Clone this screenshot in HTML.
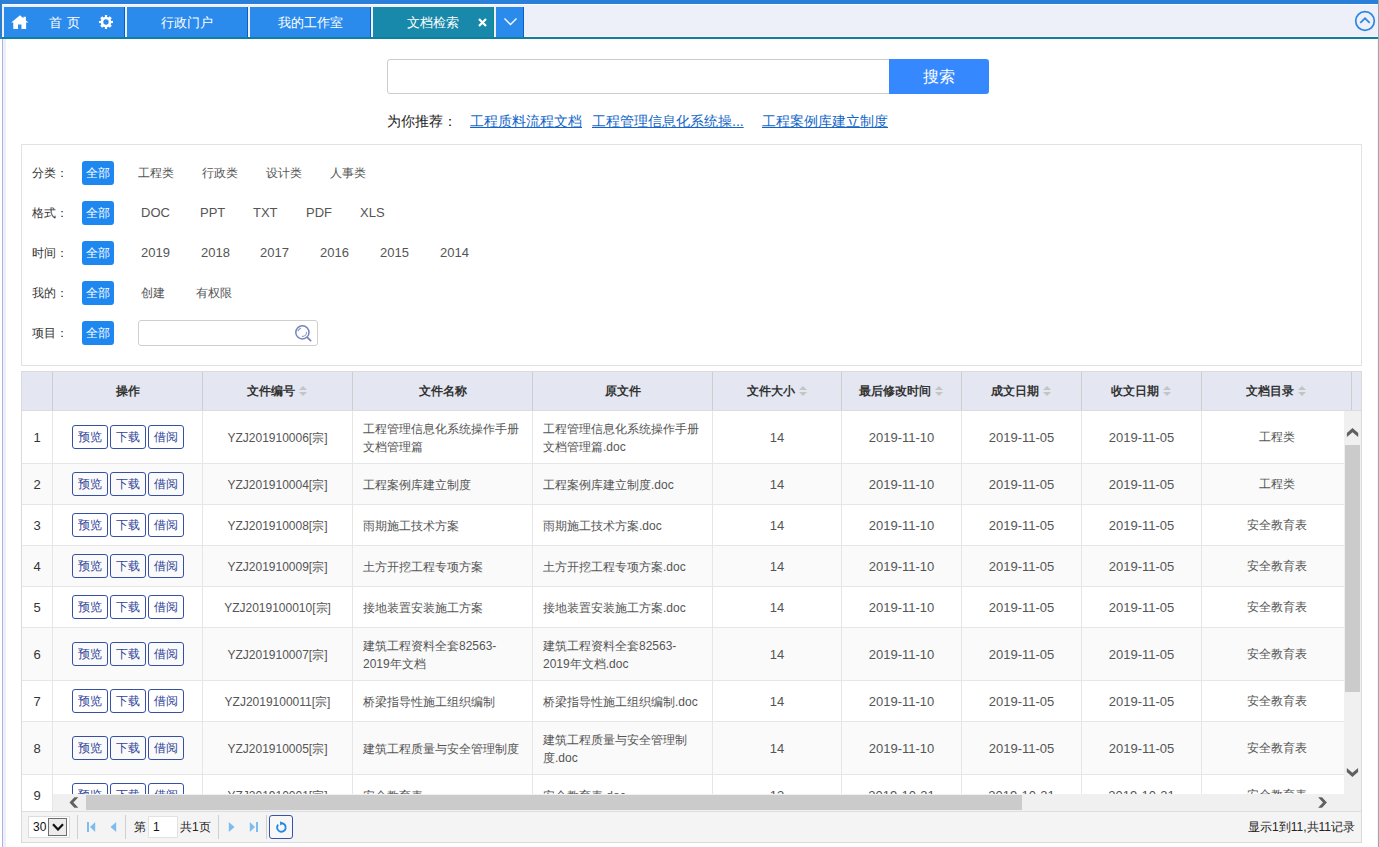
<!DOCTYPE html>
<html><head><meta charset="utf-8">
<style>
*{box-sizing:border-box;margin:0;padding:0}
html,body{width:1379px;height:847px;overflow:hidden;background:#fff}
body{position:relative;font-family:"Liberation Sans",sans-serif;font-size:12px;color:#333}
.a{position:absolute}
/* header */
#topbar{left:0;top:0;width:1379px;height:4px;background:#2a80d8}
#hdr{left:0;top:4px;width:1379px;height:33px;background:#edf0f8;border-top:1px solid #fbfbfe;border-bottom:1px solid #fbfbfe}
#teal{left:0;top:37px;width:1378px;height:2px;background:#0d7fa1}
#lstrip{left:0;top:0;width:2px;height:39px;background:#2a7dd2}
.tab{top:7px;height:30px;background:#2b8bed;border-right:1px solid #0a5fc2;color:#fff;font-size:13px;line-height:31px;text-align:center}
.tab.act{background:#1889ab;border-right-color:#0b8a84}
#lline{left:2px;top:39px;width:1px;height:808px;background:#aab6da}
#lline2{left:3px;top:39px;width:3px;height:808px;background:#edf0f9}
#rline{left:1378px;top:0;width:1px;height:847px;background:#a4a4a4}
#rline2{left:1377px;top:39px;width:1px;height:808px;background:#f2f4fd}
/* search */
#sinput{left:387px;top:59px;width:506px;height:35px;border:1px solid #cccccc;border-radius:3px;background:#fff}
#sbtn{left:889px;top:59px;width:100px;height:35px;background:#3688ff;border-radius:0 3px 3px 0;color:#fff;font-size:16px;line-height:35px;text-align:center}
#rec{left:387px;top:112px;font-size:14px;line-height:18px;color:#222;white-space:nowrap}
#rec a{color:#1266c8;text-decoration:underline;position:absolute;top:0;white-space:nowrap}
/* filter panel */
#panel{left:21px;top:144px;width:1341px;height:222px;border:1px solid #e2e2e2;background:#fff}
.lbl{left:32px;font-size:12px;color:#333;line-height:24px}
.all{left:82px;width:32px;height:24px;background:#1e88f0;border-radius:3px;color:#fff;font-size:12px;line-height:24px;text-align:center}
.opt{font-size:12px;color:#555;line-height:24px;white-space:nowrap}
#proj{left:138px;top:320px;width:180px;height:26px;border:1px solid #cfcfcf;border-radius:3px;background:#fff}

#grid{left:21px;top:371px;width:1341px;height:472px;border:1px solid #dadada;background:#fff}
#ghead{left:22px;top:372px;width:1339px;height:39px;background:#e4e7f1;border-bottom:1px solid #dcdcdc}
.hc{top:372px;height:38px;line-height:38px;text-align:center;font-weight:bold;color:#333;font-size:12px;white-space:nowrap}
.srt{display:inline-block;width:9px;height:11px;margin-left:4px;vertical-align:-2px;position:relative}
.srt:before{content:"";position:absolute;left:0;top:0;border-left:4.5px solid transparent;border-right:4.5px solid transparent;border-bottom:4.5px solid #c4c4c4}
.srt:after{content:"";position:absolute;left:0;top:6px;border-left:4.5px solid transparent;border-right:4.5px solid transparent;border-top:4.5px solid #c4c4c4}
.hl{top:372px;width:1px;height:38px;background:#cdcdcd}
.row{left:22px;width:1322px;overflow:hidden}
.row .c{top:0;text-align:center;color:#555;white-space:nowrap;overflow:hidden;font-size:12px}
.row .num{color:#333}
.row .lat{font-size:13px;padding-top:1px}
.row .code{padding-top:1px}
.row .lft{text-align:left;padding-left:10px}
.ml{display:inline-block;line-height:18px;vertical-align:middle;position:relative;top:1px}
.bl{top:0;width:1px;background:#e6e6e6}
.hb{left:0;width:1322px;height:1px;background:#e6e6e6}
.btn{position:absolute;width:36px;height:24px;border:1px solid #3650a6;border-radius:3px;color:#2e4499;font-weight:normal;line-height:22px;text-align:center;font-size:12px}
#vsb{left:1344px;top:411px;width:17px;height:383px;background:#f0f0f0}
#vthumb{left:1345px;top:445px;width:15px;height:247px;background:#cbcbcb}
#hsb{left:53px;top:794px;width:1308px;height:17px;background:#f0f0f0}
#hthumb{left:86px;top:795px;width:936px;height:15px;background:#cbcbcb}
#pager{left:22px;top:811px;width:1339px;height:31px;background:#f4f4f4;border-top:1px solid #dedede}
#psel{left:28px;top:816px;width:42px;height:22px;background:#fff;border:1px solid #dcdcdc}
#pselbtn{left:48px;top:818px;width:19px;height:18px;background:#ececec;border:1px solid #6e6e6e}
.psep{top:815px;width:1px;height:24px;background:#cfcfcf}
.ptxt{top:817px;line-height:20px;font-size:12px;color:#222;white-space:nowrap}
#ppage{left:148px;top:816px;width:30px;height:22px;background:#fff;border:1px solid #e2e2e2}
#prefresh{left:269px;top:815px;width:24px;height:24px;border:1px solid #3a52a8;border-radius:3px;background:#f7f7f7}

</style></head><body>
<div class="a" id="topbar"></div>
<div class="a" id="hdr"></div>
<div class="a" id="teal"></div>
<div class="a" id="lstrip"></div>
<div class="a" id="lline"></div>
<div class="a" id="lline2"></div>
<div class="a" id="rline2"></div>
<div class="a" id="rline"></div>

<div class="a tab" style="left:4px;width:121px;text-align:left">
  <svg class="a" style="left:6.5px;top:7.5px" width="18" height="14.5" viewBox="0 0 17 14"><path d="M8.5 0.3 L0 7.3 L2 7.3 L2 14 L6.6 14 L6.6 9.2 L9.9 9.2 L9.9 14 L14.4 14 L14.4 7.3 L16.6 7.3 L14.2 5.2 L14.2 1.6 L11.8 1.6 L11.8 3.1 Z" fill="#fff"/></svg>
  <span class="a" style="left:45px;top:0;font-size:13px;letter-spacing:0.5px">首 页</span>
  <svg class="a" style="left:94px;top:7px" width="16" height="16" viewBox="0 0 16 16"><g fill="#fff"><circle cx="8" cy="8" r="5.3"/><rect x="6.9" y="1" width="2.2" height="14"/><rect x="1" y="6.9" width="14" height="2.2"/><rect x="6.6" y="1.2" width="2.8" height="13.6" transform="rotate(45 8 8)"/><rect x="6.6" y="1.2" width="2.8" height="13.6" transform="rotate(135 8 8)"/></g><circle cx="8" cy="8" r="2.7" fill="#2b8bed"/></svg>
</div>
<div class="a tab" style="left:127px;width:121px">行政门户</div>
<div class="a tab" style="left:250px;width:121px">我的工作室</div>
<div class="a tab act" style="left:373px;width:121px"><span style="padding-left:0px">文档检索</span>
  <svg class="a" style="left:104.5px;top:10.5px" width="9" height="9" viewBox="0 0 9 9"><path d="M1 1L8 8M8 1L1 8" stroke="#fff" stroke-width="2.2"/></svg>
</div>
<div class="a tab" style="left:496px;width:28px">
  <svg class="a" style="left:6.5px;top:10px" width="15" height="10" viewBox="0 0 15 10"><path d="M1.5 1.5L7.5 7.5L13.5 1.5" stroke="#fff" stroke-width="1.35" fill="none"/></svg>
</div>
<svg class="a" style="left:1354px;top:10px" width="22" height="22" viewBox="0 0 22 22"><circle cx="11" cy="11" r="9.3" stroke="#2a86e2" stroke-width="1.7" fill="none"/><path d="M6.3 12.8L11 8.3L15.7 12.8" stroke="#2a86e2" stroke-width="1.7" fill="none"/></svg>

<!-- search -->
<div class="a" id="sinput"></div>
<div class="a" id="sbtn">搜索</div>
<div class="a" id="rec">为你推荐：
  <a style="left:83px">工程质料流程文档</a>
  <a style="left:205px">工程管理信息化系统操...</a>
  <a style="left:375px">工程案例库建立制度</a>
</div>

<!-- filter panel -->
<div class="a" id="panel"></div>
<div class="a lbl" style="top:161px">分类：</div>
<div class="a all" style="top:161px">全部</div>
<div class="a opt" style="top:161px;left:138px">工程类</div>
<div class="a opt" style="top:161px;left:202px">行政类</div>
<div class="a opt" style="top:161px;left:266px">设计类</div>
<div class="a opt" style="top:161px;left:330px">人事类</div>

<div class="a lbl" style="top:201px">格式：</div>
<div class="a all" style="top:201px">全部</div>
<div class="a opt" style="top:201px;left:141px;font-size:13px">DOC</div>
<div class="a opt" style="top:201px;left:200px;font-size:13px">PPT</div>
<div class="a opt" style="top:201px;left:253px;font-size:13px">TXT</div>
<div class="a opt" style="top:201px;left:306px;font-size:13px">PDF</div>
<div class="a opt" style="top:201px;left:360px;font-size:13px">XLS</div>

<div class="a lbl" style="top:241px">时间：</div>
<div class="a all" style="top:241px">全部</div>
<div class="a opt" style="top:241px;left:141px;font-size:13px">2019</div>
<div class="a opt" style="top:241px;left:201px;font-size:13px">2018</div>
<div class="a opt" style="top:241px;left:260px;font-size:13px">2017</div>
<div class="a opt" style="top:241px;left:320px;font-size:13px">2016</div>
<div class="a opt" style="top:241px;left:380px;font-size:13px">2015</div>
<div class="a opt" style="top:241px;left:440px;font-size:13px">2014</div>

<div class="a lbl" style="top:281px">我的：</div>
<div class="a all" style="top:281px">全部</div>
<div class="a opt" style="top:281px;left:141px">创建</div>
<div class="a opt" style="top:281px;left:196px">有权限</div>

<div class="a lbl" style="top:321px">项目：</div>
<div class="a all" style="top:321px">全部</div>
<div class="a" id="proj"></div>
<svg class="a" style="left:294px;top:324px" width="18" height="18" viewBox="0 0 18 18"><circle cx="8.4" cy="8.4" r="6.6" stroke="#7584bb" stroke-width="1.5" fill="none"/><path d="M13.3 13.3L16.6 16.6" stroke="#7584bb" stroke-width="1.7" stroke-linecap="round"/><path d="M4.1 6.8A4.6 4.6 0 0 1 6.6 4.2" stroke="#8593c4" stroke-width="1.1" fill="none" stroke-linecap="round"/><path d="M12.5 8.2A4.2 4.2 0 0 1 8.4 12.4" stroke="#8593c4" stroke-width="1.1" fill="none" stroke-linecap="round"/></svg>

<!-- GRID -->
<div class="a" id="grid"></div>
<div class="a" id="ghead"></div>
<div class="a hc" style="left:22px;width:30px"><span></span></div>
<div class="a hc" style="left:53px;width:149px"><span>操作</span></div>
<div class="a hc" style="left:203px;width:149px"><span>文件编号</span><i class="srt"></i></div>
<div class="a hc" style="left:353px;width:179px"><span>文件名称</span></div>
<div class="a hc" style="left:533px;width:179px"><span>原文件</span></div>
<div class="a hc" style="left:713px;width:128px"><span>文件大小</span><i class="srt"></i></div>
<div class="a hc" style="left:842px;width:119px"><span>最后修改时间</span><i class="srt"></i></div>
<div class="a hc" style="left:962px;width:119px"><span>成文日期</span><i class="srt"></i></div>
<div class="a hc" style="left:1082px;width:119px"><span>收文日期</span><i class="srt"></i></div>
<div class="a hc" style="left:1202px;width:149px"><span>文档目录</span><i class="srt"></i></div>
<div class="a hl" style="left:52px"></div>
<div class="a hl" style="left:202px"></div>
<div class="a hl" style="left:352px"></div>
<div class="a hl" style="left:532px"></div>
<div class="a hl" style="left:712px"></div>
<div class="a hl" style="left:841px"></div>
<div class="a hl" style="left:961px"></div>
<div class="a hl" style="left:1081px"></div>
<div class="a hl" style="left:1201px"></div>
<div class="a hl" style="left:1351px"></div>
<div class="a row" style="top:411px;height:53px;background:#fff">
<div class="a c num lat" style="left:0px;width:30px;height:52px;line-height:52px">1</div>
<div class="a c ops" style="left:31px;width:149px;height:52px;line-height:51px"><b class="btn" style="left:19px;top:14px">预览</b><b class="btn" style="left:57px;top:14px">下载</b><b class="btn" style="left:95px;top:14px">借阅</b></div>
<div class="a c code" style="left:181px;width:149px;height:52px;line-height:52px">YZJ201910006[宗]</div>
<div class="a c lft" style="left:331px;width:179px;height:52px;line-height:51px"><span class="ml">工程管理信息化系统操作手册<br>文档管理篇</span></div>
<div class="a c lft" style="left:511px;width:179px;height:52px;line-height:51px"><span class="ml">工程管理信息化系统操作手册<br>文档管理篇.doc</span></div>
<div class="a c lat" style="left:691px;width:128px;height:52px;line-height:52px">14</div>
<div class="a c lat" style="left:820px;width:119px;height:52px;line-height:52px">2019-11-10</div>
<div class="a c lat" style="left:940px;width:119px;height:52px;line-height:52px">2019-11-05</div>
<div class="a c lat" style="left:1060px;width:119px;height:52px;line-height:52px">2019-11-05</div>
<div class="a c cat" style="left:1180px;width:149px;height:52px;line-height:52px">工程类</div>
<div class="a bl" style="left:30px;height:53px"></div>
<div class="a bl" style="left:180px;height:53px"></div>
<div class="a bl" style="left:330px;height:53px"></div>
<div class="a bl" style="left:510px;height:53px"></div>
<div class="a bl" style="left:690px;height:53px"></div>
<div class="a bl" style="left:819px;height:53px"></div>
<div class="a bl" style="left:939px;height:53px"></div>
<div class="a bl" style="left:1059px;height:53px"></div>
<div class="a bl" style="left:1179px;height:53px"></div>
<div class="a bl" style="left:1329px;height:53px"></div>
<div class="a hb" style="top:52px"></div>
</div>
<div class="a row" style="top:464px;height:41px;background:#fafafa">
<div class="a c num lat" style="left:0px;width:30px;height:40px;line-height:40px">2</div>
<div class="a c ops" style="left:31px;width:149px;height:40px;line-height:38px"><b class="btn" style="left:19px;top:8px">预览</b><b class="btn" style="left:57px;top:8px">下载</b><b class="btn" style="left:95px;top:8px">借阅</b></div>
<div class="a c code" style="left:181px;width:149px;height:40px;line-height:40px">YZJ201910004[宗]</div>
<div class="a c lft" style="left:331px;width:179px;height:40px;line-height:38px"><span class="ml">工程案例库建立制度</span></div>
<div class="a c lft" style="left:511px;width:179px;height:40px;line-height:38px"><span class="ml">工程案例库建立制度.doc</span></div>
<div class="a c lat" style="left:691px;width:128px;height:40px;line-height:40px">14</div>
<div class="a c lat" style="left:820px;width:119px;height:40px;line-height:40px">2019-11-10</div>
<div class="a c lat" style="left:940px;width:119px;height:40px;line-height:40px">2019-11-05</div>
<div class="a c lat" style="left:1060px;width:119px;height:40px;line-height:40px">2019-11-05</div>
<div class="a c cat" style="left:1180px;width:149px;height:40px;line-height:40px">工程类</div>
<div class="a bl" style="left:30px;height:41px"></div>
<div class="a bl" style="left:180px;height:41px"></div>
<div class="a bl" style="left:330px;height:41px"></div>
<div class="a bl" style="left:510px;height:41px"></div>
<div class="a bl" style="left:690px;height:41px"></div>
<div class="a bl" style="left:819px;height:41px"></div>
<div class="a bl" style="left:939px;height:41px"></div>
<div class="a bl" style="left:1059px;height:41px"></div>
<div class="a bl" style="left:1179px;height:41px"></div>
<div class="a bl" style="left:1329px;height:41px"></div>
<div class="a hb" style="top:40px"></div>
</div>
<div class="a row" style="top:505px;height:41px;background:#fff">
<div class="a c num lat" style="left:0px;width:30px;height:40px;line-height:40px">3</div>
<div class="a c ops" style="left:31px;width:149px;height:40px;line-height:38px"><b class="btn" style="left:19px;top:8px">预览</b><b class="btn" style="left:57px;top:8px">下载</b><b class="btn" style="left:95px;top:8px">借阅</b></div>
<div class="a c code" style="left:181px;width:149px;height:40px;line-height:40px">YZJ201910008[宗]</div>
<div class="a c lft" style="left:331px;width:179px;height:40px;line-height:38px"><span class="ml">雨期施工技术方案</span></div>
<div class="a c lft" style="left:511px;width:179px;height:40px;line-height:38px"><span class="ml">雨期施工技术方案.doc</span></div>
<div class="a c lat" style="left:691px;width:128px;height:40px;line-height:40px">14</div>
<div class="a c lat" style="left:820px;width:119px;height:40px;line-height:40px">2019-11-10</div>
<div class="a c lat" style="left:940px;width:119px;height:40px;line-height:40px">2019-11-05</div>
<div class="a c lat" style="left:1060px;width:119px;height:40px;line-height:40px">2019-11-05</div>
<div class="a c cat" style="left:1180px;width:149px;height:40px;line-height:40px">安全教育表</div>
<div class="a bl" style="left:30px;height:41px"></div>
<div class="a bl" style="left:180px;height:41px"></div>
<div class="a bl" style="left:330px;height:41px"></div>
<div class="a bl" style="left:510px;height:41px"></div>
<div class="a bl" style="left:690px;height:41px"></div>
<div class="a bl" style="left:819px;height:41px"></div>
<div class="a bl" style="left:939px;height:41px"></div>
<div class="a bl" style="left:1059px;height:41px"></div>
<div class="a bl" style="left:1179px;height:41px"></div>
<div class="a bl" style="left:1329px;height:41px"></div>
<div class="a hb" style="top:40px"></div>
</div>
<div class="a row" style="top:546px;height:41px;background:#fafafa">
<div class="a c num lat" style="left:0px;width:30px;height:40px;line-height:40px">4</div>
<div class="a c ops" style="left:31px;width:149px;height:40px;line-height:38px"><b class="btn" style="left:19px;top:8px">预览</b><b class="btn" style="left:57px;top:8px">下载</b><b class="btn" style="left:95px;top:8px">借阅</b></div>
<div class="a c code" style="left:181px;width:149px;height:40px;line-height:40px">YZJ201910009[宗]</div>
<div class="a c lft" style="left:331px;width:179px;height:40px;line-height:38px"><span class="ml">土方开挖工程专项方案</span></div>
<div class="a c lft" style="left:511px;width:179px;height:40px;line-height:38px"><span class="ml">土方开挖工程专项方案.doc</span></div>
<div class="a c lat" style="left:691px;width:128px;height:40px;line-height:40px">14</div>
<div class="a c lat" style="left:820px;width:119px;height:40px;line-height:40px">2019-11-10</div>
<div class="a c lat" style="left:940px;width:119px;height:40px;line-height:40px">2019-11-05</div>
<div class="a c lat" style="left:1060px;width:119px;height:40px;line-height:40px">2019-11-05</div>
<div class="a c cat" style="left:1180px;width:149px;height:40px;line-height:40px">安全教育表</div>
<div class="a bl" style="left:30px;height:41px"></div>
<div class="a bl" style="left:180px;height:41px"></div>
<div class="a bl" style="left:330px;height:41px"></div>
<div class="a bl" style="left:510px;height:41px"></div>
<div class="a bl" style="left:690px;height:41px"></div>
<div class="a bl" style="left:819px;height:41px"></div>
<div class="a bl" style="left:939px;height:41px"></div>
<div class="a bl" style="left:1059px;height:41px"></div>
<div class="a bl" style="left:1179px;height:41px"></div>
<div class="a bl" style="left:1329px;height:41px"></div>
<div class="a hb" style="top:40px"></div>
</div>
<div class="a row" style="top:587px;height:41px;background:#fff">
<div class="a c num lat" style="left:0px;width:30px;height:40px;line-height:40px">5</div>
<div class="a c ops" style="left:31px;width:149px;height:40px;line-height:38px"><b class="btn" style="left:19px;top:8px">预览</b><b class="btn" style="left:57px;top:8px">下载</b><b class="btn" style="left:95px;top:8px">借阅</b></div>
<div class="a c code" style="left:181px;width:149px;height:40px;line-height:40px">YZJ2019100010[宗]</div>
<div class="a c lft" style="left:331px;width:179px;height:40px;line-height:38px"><span class="ml">接地装置安装施工方案</span></div>
<div class="a c lft" style="left:511px;width:179px;height:40px;line-height:38px"><span class="ml">接地装置安装施工方案.doc</span></div>
<div class="a c lat" style="left:691px;width:128px;height:40px;line-height:40px">14</div>
<div class="a c lat" style="left:820px;width:119px;height:40px;line-height:40px">2019-11-10</div>
<div class="a c lat" style="left:940px;width:119px;height:40px;line-height:40px">2019-11-05</div>
<div class="a c lat" style="left:1060px;width:119px;height:40px;line-height:40px">2019-11-05</div>
<div class="a c cat" style="left:1180px;width:149px;height:40px;line-height:40px">安全教育表</div>
<div class="a bl" style="left:30px;height:41px"></div>
<div class="a bl" style="left:180px;height:41px"></div>
<div class="a bl" style="left:330px;height:41px"></div>
<div class="a bl" style="left:510px;height:41px"></div>
<div class="a bl" style="left:690px;height:41px"></div>
<div class="a bl" style="left:819px;height:41px"></div>
<div class="a bl" style="left:939px;height:41px"></div>
<div class="a bl" style="left:1059px;height:41px"></div>
<div class="a bl" style="left:1179px;height:41px"></div>
<div class="a bl" style="left:1329px;height:41px"></div>
<div class="a hb" style="top:40px"></div>
</div>
<div class="a row" style="top:628px;height:53px;background:#fafafa">
<div class="a c num lat" style="left:0px;width:30px;height:52px;line-height:52px">6</div>
<div class="a c ops" style="left:31px;width:149px;height:52px;line-height:51px"><b class="btn" style="left:19px;top:14px">预览</b><b class="btn" style="left:57px;top:14px">下载</b><b class="btn" style="left:95px;top:14px">借阅</b></div>
<div class="a c code" style="left:181px;width:149px;height:52px;line-height:52px">YZJ201910007[宗]</div>
<div class="a c lft" style="left:331px;width:179px;height:52px;line-height:51px"><span class="ml">建筑工程资料全套82563-<br>2019年文档</span></div>
<div class="a c lft" style="left:511px;width:179px;height:52px;line-height:51px"><span class="ml">建筑工程资料全套82563-<br>2019年文档.doc</span></div>
<div class="a c lat" style="left:691px;width:128px;height:52px;line-height:52px">14</div>
<div class="a c lat" style="left:820px;width:119px;height:52px;line-height:52px">2019-11-10</div>
<div class="a c lat" style="left:940px;width:119px;height:52px;line-height:52px">2019-11-05</div>
<div class="a c lat" style="left:1060px;width:119px;height:52px;line-height:52px">2019-11-05</div>
<div class="a c cat" style="left:1180px;width:149px;height:52px;line-height:52px">安全教育表</div>
<div class="a bl" style="left:30px;height:53px"></div>
<div class="a bl" style="left:180px;height:53px"></div>
<div class="a bl" style="left:330px;height:53px"></div>
<div class="a bl" style="left:510px;height:53px"></div>
<div class="a bl" style="left:690px;height:53px"></div>
<div class="a bl" style="left:819px;height:53px"></div>
<div class="a bl" style="left:939px;height:53px"></div>
<div class="a bl" style="left:1059px;height:53px"></div>
<div class="a bl" style="left:1179px;height:53px"></div>
<div class="a bl" style="left:1329px;height:53px"></div>
<div class="a hb" style="top:52px"></div>
</div>
<div class="a row" style="top:681px;height:41px;background:#fff">
<div class="a c num lat" style="left:0px;width:30px;height:40px;line-height:40px">7</div>
<div class="a c ops" style="left:31px;width:149px;height:40px;line-height:38px"><b class="btn" style="left:19px;top:8px">预览</b><b class="btn" style="left:57px;top:8px">下载</b><b class="btn" style="left:95px;top:8px">借阅</b></div>
<div class="a c code" style="left:181px;width:149px;height:40px;line-height:40px">YZJ2019100011[宗]</div>
<div class="a c lft" style="left:331px;width:179px;height:40px;line-height:38px"><span class="ml">桥梁指导性施工组织编制</span></div>
<div class="a c lft" style="left:511px;width:179px;height:40px;line-height:38px"><span class="ml">桥梁指导性施工组织编制.doc</span></div>
<div class="a c lat" style="left:691px;width:128px;height:40px;line-height:40px">14</div>
<div class="a c lat" style="left:820px;width:119px;height:40px;line-height:40px">2019-11-10</div>
<div class="a c lat" style="left:940px;width:119px;height:40px;line-height:40px">2019-11-05</div>
<div class="a c lat" style="left:1060px;width:119px;height:40px;line-height:40px">2019-11-05</div>
<div class="a c cat" style="left:1180px;width:149px;height:40px;line-height:40px">安全教育表</div>
<div class="a bl" style="left:30px;height:41px"></div>
<div class="a bl" style="left:180px;height:41px"></div>
<div class="a bl" style="left:330px;height:41px"></div>
<div class="a bl" style="left:510px;height:41px"></div>
<div class="a bl" style="left:690px;height:41px"></div>
<div class="a bl" style="left:819px;height:41px"></div>
<div class="a bl" style="left:939px;height:41px"></div>
<div class="a bl" style="left:1059px;height:41px"></div>
<div class="a bl" style="left:1179px;height:41px"></div>
<div class="a bl" style="left:1329px;height:41px"></div>
<div class="a hb" style="top:40px"></div>
</div>
<div class="a row" style="top:722px;height:53px;background:#fafafa">
<div class="a c num lat" style="left:0px;width:30px;height:52px;line-height:52px">8</div>
<div class="a c ops" style="left:31px;width:149px;height:52px;line-height:51px"><b class="btn" style="left:19px;top:14px">预览</b><b class="btn" style="left:57px;top:14px">下载</b><b class="btn" style="left:95px;top:14px">借阅</b></div>
<div class="a c code" style="left:181px;width:149px;height:52px;line-height:52px">YZJ201910005[宗]</div>
<div class="a c lft" style="left:331px;width:179px;height:52px;line-height:51px"><span class="ml">建筑工程质量与安全管理制度</span></div>
<div class="a c lft" style="left:511px;width:179px;height:52px;line-height:51px"><span class="ml">建筑工程质量与安全管理制<br>度.doc</span></div>
<div class="a c lat" style="left:691px;width:128px;height:52px;line-height:52px">14</div>
<div class="a c lat" style="left:820px;width:119px;height:52px;line-height:52px">2019-11-10</div>
<div class="a c lat" style="left:940px;width:119px;height:52px;line-height:52px">2019-11-05</div>
<div class="a c lat" style="left:1060px;width:119px;height:52px;line-height:52px">2019-11-05</div>
<div class="a c cat" style="left:1180px;width:149px;height:52px;line-height:52px">安全教育表</div>
<div class="a bl" style="left:30px;height:53px"></div>
<div class="a bl" style="left:180px;height:53px"></div>
<div class="a bl" style="left:330px;height:53px"></div>
<div class="a bl" style="left:510px;height:53px"></div>
<div class="a bl" style="left:690px;height:53px"></div>
<div class="a bl" style="left:819px;height:53px"></div>
<div class="a bl" style="left:939px;height:53px"></div>
<div class="a bl" style="left:1059px;height:53px"></div>
<div class="a bl" style="left:1179px;height:53px"></div>
<div class="a bl" style="left:1329px;height:53px"></div>
<div class="a hb" style="top:52px"></div>
</div>
<div class="a row" style="top:775px;height:36px;background:#fff">
<div class="a c num lat" style="left:0px;width:30px;height:40px;line-height:40px">9</div>
<div class="a c ops" style="left:31px;width:149px;height:40px;line-height:38px"><b class="btn" style="left:19px;top:8px">预览</b><b class="btn" style="left:57px;top:8px">下载</b><b class="btn" style="left:95px;top:8px">借阅</b></div>
<div class="a c code" style="left:181px;width:149px;height:40px;line-height:40px">YZJ201910001[宗]</div>
<div class="a c lft" style="left:331px;width:179px;height:40px;line-height:38px"><span class="ml">安全教育表</span></div>
<div class="a c lft" style="left:511px;width:179px;height:40px;line-height:38px"><span class="ml">安全教育表.doc</span></div>
<div class="a c lat" style="left:691px;width:128px;height:40px;line-height:40px">13</div>
<div class="a c lat" style="left:820px;width:119px;height:40px;line-height:40px">2019-10-31</div>
<div class="a c lat" style="left:940px;width:119px;height:40px;line-height:40px">2019-10-31</div>
<div class="a c lat" style="left:1060px;width:119px;height:40px;line-height:40px">2019-10-31</div>
<div class="a c cat" style="left:1180px;width:149px;height:40px;line-height:40px">安全教育表</div>
<div class="a bl" style="left:30px;height:36px"></div>
<div class="a bl" style="left:180px;height:36px"></div>
<div class="a bl" style="left:330px;height:36px"></div>
<div class="a bl" style="left:510px;height:36px"></div>
<div class="a bl" style="left:690px;height:36px"></div>
<div class="a bl" style="left:819px;height:36px"></div>
<div class="a bl" style="left:939px;height:36px"></div>
<div class="a bl" style="left:1059px;height:36px"></div>
<div class="a bl" style="left:1179px;height:36px"></div>
<div class="a bl" style="left:1329px;height:36px"></div>
</div>
<!-- scrollbars -->
<div class="a" id="vsb"></div>
<div class="a" id="vthumb"></div>
<div class="a" id="hsb"></div>
<div class="a" id="hthumb"></div>
<svg class="a" style="left:0;top:0" width="1379" height="847" viewBox="0 0 1379 847">
<path d="M1346.9 433.1L1352.5 428.1L1358.2 433.1L1358.2 436.9L1352.5 432.2L1346.9 436.9Z" fill="#606060"/>
<path d="M1346.8 768.1L1352.4 772.7L1358.1 768.1L1358.1 772L1352.4 777L1346.8 772Z" fill="#606060"/>
<path d="M1318.1 797.2L1322 797.2L1326.9 802.5L1322 807.8L1318.1 807.8L1323 802.5Z" fill="#606060"/>
<path d="M78.3 797.2L74.4 797.2L69.5 802.5L74.4 807.8L78.3 807.8L73.4 802.5Z" fill="#606060"/>
</svg>

<!-- pager -->
<div class="a" id="pager"></div>
<div class="a" id="psel"><span class="a" style="left:4px;top:0;line-height:20px;font-size:12px;color:#111">30</span></div>
<div class="a" id="pselbtn"><svg class="a" style="left:3px;top:4px" width="12" height="8" viewBox="0 0 12 8"><path d="M1 1.2L6 6.5L11 1.2" stroke="#111" stroke-width="2.2" fill="none"/></svg></div>
<div class="a psep" style="left:77px"></div>
<svg class="a" style="left:87px;top:822px" width="9" height="10" viewBox="0 0 9 10"><rect x="0" y="0" width="2" height="10" fill="#7dbcef"/><path d="M8.2 0L3 5L8.2 10Z" fill="#7dbcef"/></svg>
<svg class="a" style="left:109px;top:822px" width="8" height="10" viewBox="0 0 8 10"><path d="M7.2 0L1.5 5L7.2 10Z" fill="#7dbcef"/></svg>
<div class="a psep" style="left:125px"></div>
<div class="a ptxt" style="left:134px">第</div>
<div class="a" id="ppage"><span class="a" style="left:4px;top:0;line-height:20px;font-size:12px;color:#111">1</span></div>
<div class="a ptxt" style="left:180px">共1页</div>
<div class="a psep" style="left:218px"></div>
<svg class="a" style="left:228px;top:822px" width="8" height="10" viewBox="0 0 8 10"><path d="M0.8 0L6.5 5L0.8 10Z" fill="#7dbcef"/></svg>
<svg class="a" style="left:249px;top:822px" width="10" height="10" viewBox="0 0 10 10"><path d="M0.8 0L6 5L0.8 10Z" fill="#7dbcef"/><rect x="7" y="0" width="2" height="10" fill="#7dbcef"/></svg>
<div class="a psep" style="left:266px"></div>
<div class="a" id="prefresh"><svg class="a" style="left:5px;top:5px" width="13" height="13" viewBox="0 0 13 13"><path d="M3.2 3.6A4.3 4.3 0 1 0 6.5 2.2" stroke="#2389e6" stroke-width="1.9" fill="none"/><path d="M5 0.2L8.6 2.3L5.2 4.6Z" fill="#2389e6"/></svg></div>
<div class="a ptxt" style="left:1000px;width:355px;text-align:right">显示1到11,共11记录</div>
</body></html>
